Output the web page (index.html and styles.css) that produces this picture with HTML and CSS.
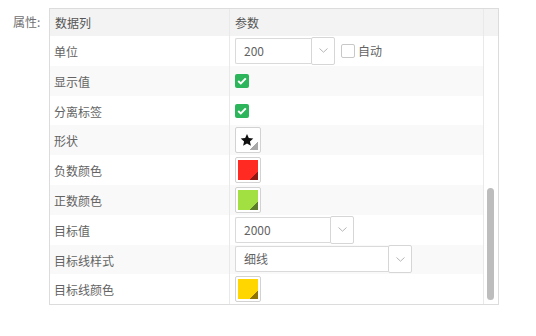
FILE: index.html
```html
<!DOCTYPE html>
<html lang="zh-CN">
<head>
    <meta charset="UTF-8">
    <title>属性</title>
    <link rel="stylesheet" href="styles.css">
</head>
<body>
    <div class="prop-wrap">
        <div class="prop-label">属性:</div>
        <div class="prop-panel">
            <div class="prop-head">
                <div class="cell-name">数据列</div>
                <div class="cell-value">参数</div>
                <div class="cell-scroll"></div>
            </div>
            <div class="prop-body">
                <div class="rows">
                    <div class="row">
                        <div class="cell-name">单位</div>
                        <div class="cell-value">
                            <div class="combo">
                                <div class="combo-input w76">200</div>
                                <div class="combo-btn"><svg width="9" height="5" viewBox="0 0 9 5"><path d="M0.5 0.5 L4.5 4.2 L8.5 0.5" fill="none" stroke="#b5b5b5" stroke-width="1"/></svg></div>
                            </div>
                            <label class="check-auto"><span class="box"></span>自动</label>
                        </div>
                    </div>
                    <div class="row">
                        <div class="cell-name">显示值</div>
                        <div class="cell-value"><span class="checked"><svg width="10" height="8" viewBox="0 0 10 8"><path d="M1.2 4 L3.8 6.4 L8.8 1.4" fill="none" stroke="#fff" stroke-width="2"/></svg></span></div>
                    </div>
                    <div class="row">
                        <div class="cell-name">分离标签</div>
                        <div class="cell-value"><span class="checked"><svg width="10" height="8" viewBox="0 0 10 8"><path d="M1.2 4 L3.8 6.4 L8.8 1.4" fill="none" stroke="#fff" stroke-width="2"/></svg></span></div>
                    </div>
                    <div class="row">
                        <div class="cell-name">形状</div>
                        <div class="cell-value">
                            <div class="swatch"><span class="fill shape"><svg width="14" height="14" viewBox="0 0 24 24"><path d="M12 1.5 L15.1 8.6 L22.8 9.3 L17 14.4 L18.7 22 L12 18 L5.3 22 L7 14.4 L1.2 9.3 L8.9 8.6 Z" fill="#111"/></svg></span></div>
                        </div>
                    </div>
                    <div class="row">
                        <div class="cell-name">负数颜色</div>
                        <div class="cell-value"><div class="swatch"><span class="fill red"></span></div></div>
                    </div>
                    <div class="row">
                        <div class="cell-name">正数颜色</div>
                        <div class="cell-value"><div class="swatch"><span class="fill green"></span></div></div>
                    </div>
                    <div class="row">
                        <div class="cell-name">目标值</div>
                        <div class="cell-value">
                            <div class="combo">
                                <div class="combo-input w95">2000</div>
                                <div class="combo-btn"><svg width="9" height="5" viewBox="0 0 9 5"><path d="M0.5 0.5 L4.5 4.2 L8.5 0.5" fill="none" stroke="#b5b5b5" stroke-width="1"/></svg></div>
                            </div>
                        </div>
                    </div>
                    <div class="row">
                        <div class="cell-name">目标线样式</div>
                        <div class="cell-value">
                            <div class="combo">
                                <div class="combo-input w153">细线</div>
                                <div class="combo-btn"><svg width="9" height="5" viewBox="0 0 9 5"><path d="M0.5 0.5 L4.5 4.2 L8.5 0.5" fill="none" stroke="#b5b5b5" stroke-width="1"/></svg></div>
                            </div>
                        </div>
                    </div>
                    <div class="row">
                        <div class="cell-name">目标线颜色</div>
                        <div class="cell-value"><div class="swatch"><span class="fill yellow"></span></div></div>
                    </div>
                </div>
                <div class="scroll-track"><div class="scroll-thumb"></div></div>
            </div>
        </div>
    </div>
</body>
</html>
```

FILE: styles.css
```css
body {
    margin: 0;
    padding: 0;
    background-color: #fff;
    font-family: "Microsoft YaHei", "Noto Sans CJK SC", sans-serif;
    font-size: 12px;
    color: #636363;
}
.prop-wrap {
    display: flex;
    padding-top: 8px;
}
.prop-label {
    width: 36px;
    padding-left: 13px;
    padding-top: 5px;
    color: #707070;
}
.prop-panel {
    width: 448px;
    border: 1px solid #dcdcdc;
}
.prop-head {
    display: flex;
    height: 27px;
    background-color: #f3f3f3;
    color: #555;
}
.prop-head .cell-name,
.prop-head .cell-value {
    line-height: 27px;
}
.cell-name {
    width: 175px;
    padding-left: 4px;
    border-right: 1px solid #e9e9e9;
    flex-shrink: 0;
}
.prop-head .cell-name {
    padding-left: 5px;
    width: 174px;
}
.cell-value {
    flex: 1;
    display: flex;
    align-items: center;
    padding-left: 5px;
    border-right: 1px solid #e9e9e9;
}
.cell-scroll {
    width: 14px;
}
.prop-body {
    display: flex;
}
.rows {
    width: 434px;
}
.row {
    display: flex;
    height: 29.8px;
}
.row .cell-name {
    line-height: 32px;
}
.row:nth-child(even) {
    background-color: #f9f9f9;
}
.combo {
    display: flex;
    align-items: center;
}
.combo-input {
    height: 24px;
    line-height: 24px;
    padding-left: 8px;
    border: 1px solid #dadada;
    border-right: none;
    border-radius: 2px 0 0 2px;
    background-color: #fff;
    box-sizing: content-box;
}
.w76 { width: 67px; }
.w95 { width: 86px; }
.w153 { width: 144px; }
.combo-btn {
    width: 22px;
    height: 26px;
    border: 1px solid #d6d6d6;
    border-radius: 2px;
    background-color: #fff;
    display: flex;
    align-items: center;
    justify-content: center;
}
.check-auto {
    display: flex;
    align-items: center;
    margin-left: 6px;
}
.check-auto .box {
    width: 12px;
    height: 12px;
    border: 1px solid #c8c8c8;
    border-radius: 2px;
    margin-right: 3px;
    background-color: #fff;
}
.checked {
    width: 14px;
    height: 14px;
    border-radius: 2px;
    background-color: #2db55b;
    display: flex;
    align-items: center;
    justify-content: center;
    margin-top: 1px;
}
.swatch {
    width: 20px;
    height: 20px;
    padding: 2px;
    border: 1px solid #d2d2d2;
    border-radius: 2px;
    background-color: #fff;
}
.fill {
    display: block;
    width: 20px;
    height: 20px;
    background-repeat: no-repeat;
    background-position: right bottom;
    background-size: 8px 8px;
}
.fill.shape {
    display: flex;
    align-items: flex-start;
    justify-content: flex-start;
    padding: 3px 0 0 2px;
    width: 18px;
    height: 17px;
    background-image: linear-gradient(to bottom right, transparent 50%, #a9a9a9 50%);
}
.fill.red {
    background-color: #ff2b23;
    background-image: linear-gradient(to bottom right, transparent 50%, #8c1914 50%);
}
.fill.green {
    background-color: #a2e042;
    background-image: linear-gradient(to bottom right, transparent 50%, #5e7d2b 50%);
}
.fill.yellow {
    background-color: #ffd600;
    background-image: linear-gradient(to bottom right, transparent 50%, #8f7500 50%);
}
.scroll-track {
    width: 14px;
}
.scroll-thumb {
    width: 7px;
    height: 112px;
    margin-top: 152px;
    margin-left: 3px;
    border-radius: 4px;
    background-color: #bdbdbd;
}
```
